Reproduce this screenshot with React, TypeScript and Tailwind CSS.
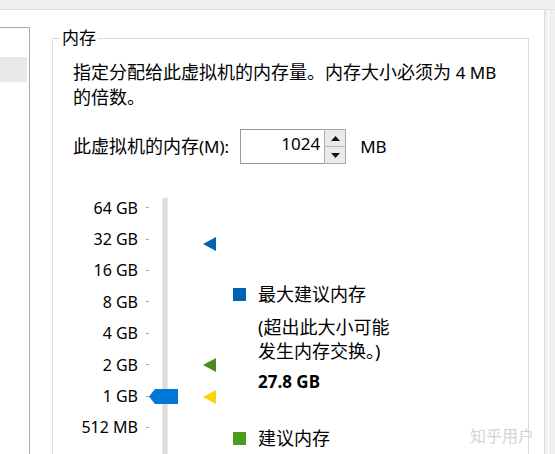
import React from "react";

const ticks = ["64 GB", "32 GB", "16 GB", "8 GB", "4 GB", "2 GB", "1 GB", "512 MB"];

function Tri({ color, top }: { color: string; top: number }) {
  return (
    <svg
      className="absolute left-[54px]"
      style={{ top }}
      width="13"
      height="14"
      viewBox="0 0 13 14"
    >
      <polygon points="0,7 13,0 13,14" fill={color} />
    </svg>
  );
}

export default function App() {
  return (
    <div
      className="w-[555px] h-[454px] overflow-hidden bg-white flex flex-col text-[#000] relative"
      style={{ fontFamily: '"Noto Sans", "Noto Sans CJK SC", sans-serif' }}
    >
      <div className="h-[10px] shrink-0 bg-[#f0f0f0] border-b border-[#e2e2e2]" />
      <div className="flex flex-1 min-h-0">
        <div className="flex-1 flex pt-[17px] bg-white">
          {/* left list panel */}
          <div className="w-[30px] shrink-0 border-t border-r border-[#a9a9a9] bg-white">
            <div className="mt-[29px] h-[25px] w-[27px] bg-[#e9e9e9]" />
          </div>
          {/* group box */}
          <div className="ml-[22px] mt-[11px] w-[477px] shrink-0 relative border border-[#dcdcdc] h-[500px]">
            <span className="absolute left-[7px] top-[-13px] bg-white px-[2px] text-[17px] leading-[24px]">
              内存
            </span>
            <div className="pl-[20px] pt-[21px]">
              <p className="text-[18px] leading-[24px]">
                指定分配给此虚拟机的内存量。内存大小必须为 <span className="text-[17px]">4 MB</span>
                <br />
                的倍数。
              </p>
              <div className="mt-[20px] h-[35px] flex items-center">
                <span className="text-[18px] leading-[24px]">
                  此虚拟机的内存<span className="text-[17px]">(M):</span>
                </span>
                <div className="ml-[11px] flex h-[35px]">
                  <div className="w-[84px] h-full border border-[#9a9a9a] border-r-0 flex items-start justify-end pr-[4px] pt-[2px] text-[17px] leading-[24px]">
                    1024
                  </div>
                  <div className="w-[22px] h-full border border-[#acacac] bg-[#e9e9e9] flex flex-col">
                    <div className="flex-1 flex items-center justify-center border-b border-[#b9b9b9]">
                      <svg width="9" height="5" viewBox="0 0 9 5">
                        <polygon points="0,5 4.5,0 9,5" fill="#111" />
                      </svg>
                    </div>
                    <div className="flex-1 flex items-center justify-center">
                      <svg width="9" height="5" viewBox="0 0 9 5">
                        <polygon points="0,0 9,0 4.5,5" fill="#111" />
                      </svg>
                    </div>
                  </div>
                </div>
                <span className="ml-[14px] text-[17px] leading-[24px]">MB</span>
              </div>
            </div>
            {/* slider section */}
            <div className="mt-[28px] flex">
              <div className="flex flex-col">
                {ticks.map((t) => (
                  <div key={t} className="h-[31.4px] flex items-center">
                    <span className="w-[85px] text-right text-[16px] leading-[20px]">{t}</span>
                    <span className="ml-[8px] w-[3px] h-px bg-[#a8a8a8]" />
                  </div>
                ))}
              </div>
              <div className="relative w-[84px]">
                <div className="ml-[13px] mt-[6px] w-[6px] h-[300px] bg-[#dedede] border-x border-[#e8e8e8]" />
                <svg
                  className="absolute left-0 top-[197px]"
                  width="29"
                  height="15"
                  viewBox="0 0 29 15"
                >
                  <polygon points="0,7.5 6,0 29,0 29,15 6,15" fill="#0078d7" />
                </svg>
                <Tri color="#0063b1" top={45} />
                <Tri color="#4c8c1f" top={166} />
                <Tri color="#f7d308" top={198} />
              </div>
              <div className="pt-[90px] flex flex-col text-[18px] leading-[24px]">
                <div className="flex items-center">
                  <span className="w-[13px] h-[13px] bg-[#0063b1]" />
                  <span className="ml-[12px]">最大建议内存</span>
                </div>
                <p className="ml-[25px] mt-[9px] leading-[24px]">
                  (超出此大小可能
                  <br />
                  发生内存交换。)
                </p>
                <p className="ml-[25px] mt-[7px] font-bold text-[17px]">27.8 GB</p>
                <div className="mt-[32px] flex items-center">
                  <span className="w-[13px] h-[13px] bg-[#4c9a1f]" />
                  <span className="ml-[12px]">建议内存</span>
                </div>
              </div>
            </div>
          </div>
        </div>
        <div className="w-[11px] shrink-0 bg-[#f0f0f0] border-l border-[#dedede] flex">
          <div className="ml-[3px] w-px bg-white" />
        </div>
      </div>
      <span className="absolute left-[470px] top-[425px] text-[16px] leading-[22px] text-[#d4d4d4]">
        知乎用户
      </span>
    </div>
  );
}
